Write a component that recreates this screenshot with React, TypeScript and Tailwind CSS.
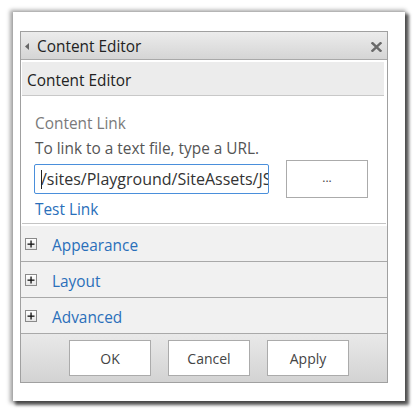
import React from "react";

const font = { fontFamily: '"Open Sans", "Noto Sans", "Liberation Sans", sans-serif' };

function PlusBox() {
  return (
    <div className="w-[12px] h-[12px] border border-[#8a8a8a] bg-gradient-to-b from-white to-[#e6e6e6] flex items-center justify-center shrink-0">
      <svg width="8" height="8" viewBox="0 0 8 8">
        <rect x="0.5" y="3.5" width="7" height="1.3" fill="#111" />
        <rect x="3.4" y="0.5" width="1.3" height="7" fill="#111" />
      </svg>
    </div>
  );
}

function Section({ label }: { label: string }) {
  return (
    <div className="h-[36px] bg-[#f1f1f1] border-b border-[#a9a9a9] flex items-center pl-[4px]">
      <PlusBox />
      <span className="ml-[15px] text-[15.4px] text-[#2a6fba] leading-none pt-[4px]">{label}</span>
    </div>
  );
}

function Btn({ label }: { label: string }) {
  return (
    <div className="w-[82px] h-[36px] bg-white border border-[#ababab] flex items-center justify-center text-[14px] text-[#444]">
      {label}
    </div>
  );
}

export default function App() {
  return (
    <div className="w-[419px] h-[416px] bg-white overflow-hidden" style={font}>
      <div className="ml-[13px] mt-[12px] w-[392px] h-[389px] bg-white pl-[7px] pt-[19px] shadow-[-1px_0_4px_2px_rgba(0,0,0,0.35),3px_3px_3px_1px_rgba(0,0,0,0.6)]">
        <div className="w-[368px] h-[352px] border border-[#a0a0a0] flex flex-col bg-white">
          {/* title bar */}
          <div className="h-[28px] shrink-0 bg-gradient-to-b from-[#ececec] to-[#d5d5d5] border-b border-[#a9a9a9] flex items-center pl-[4px] pr-[5px]">
            <svg width="4" height="7" viewBox="0 0 4 7" className="mt-[2px]">
              <polygon points="4,0 0,3.5 4,7" fill="#666" />
            </svg>
            <span className="ml-[8px] text-[15.4px] text-[#222] leading-none pt-[3px]">Content Editor</span>
            <div className="flex-1" />
            <svg width="11" height="10" viewBox="0 0 11 10" className="mt-[2px]">
              <path d="M1.5 1.2 L9.5 8.8 M9.5 1.2 L1.5 8.8" stroke="#6a6a6a" strokeWidth="2.4" strokeLinecap="square" />
            </svg>
          </div>
          {/* inner header */}
          <div className="h-[34px] shrink-0 mt-[2px] ml-[1px] mr-[3px] bg-[#ececec] border-b border-[#c8c8c8] flex items-center pl-[5px]">
            <span className="text-[15.4px] text-[#222] leading-none pt-[4px]">Content Editor</span>
          </div>
          {/* content */}
          <div className="h-[127px] shrink-0 pl-[13px] pt-[18px] flex flex-col">
            <div className="h-[20px] flex items-center text-[15.4px] text-[#7a7a7a] ml-[1px]">Content Link</div>
            <div className="h-[20px] mt-[5px] flex items-center text-[15.4px] text-[#555] ml-[1px]">To link to a text file, type a URL.</div>
            <div className="h-[38px] mt-[1px] flex items-start">
              <div className="mt-[4px] w-[235px] h-[30px] border border-[#4a8fdb] rounded-[2px] bg-white flex items-center overflow-hidden relative pl-[6px]">
                <span className="absolute left-[6px] top-[5px] w-[1px] h-[19px] bg-[#222]" />
                <span className="whitespace-nowrap text-[16px] text-[#333]">/sites/Playground/SiteAssets/JS</span>
              </div>
              <div className="ml-[17px] w-[82px] h-[38px] border border-[#ababab] bg-white flex items-center justify-center text-[12px] text-[#444] pb-[2px]">
                ...
              </div>
            </div>
            <div className="h-[20px] mt-[2px] flex items-center text-[15.4px] text-[#2a6fba] ml-[1px]">Test Link</div>
          </div>
          <div className="h-[1px] shrink-0 mx-[1px] bg-[#c4c4c4]" />
          <div className="h-[2px] shrink-0" />
          <Section label="Appearance" />
          <Section label="Layout" />
          <Section label="Advanced" />
          {/* footer */}
          <div className="flex-1 bg-gradient-to-b from-[#e9e9e9] to-[#d3d3d3] flex items-start pt-[6px] pl-[48px] gap-[17px]">
            <Btn label="OK" />
            <Btn label="Cancel" />
            <Btn label="Apply" />
          </div>
        </div>
      </div>
    </div>
  );
}
